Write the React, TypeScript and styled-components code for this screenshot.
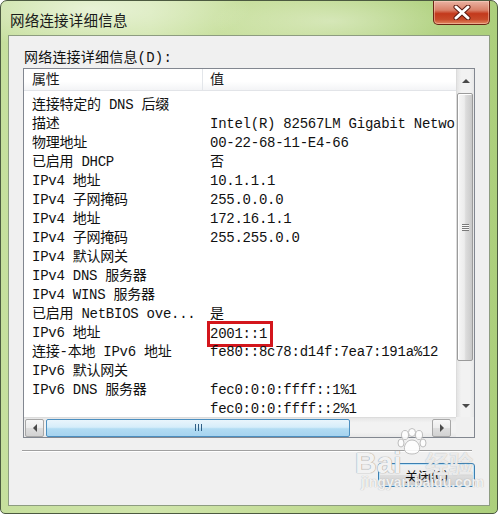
import type { FC } from 'react'
import styled, { createGlobalStyle } from 'styled-components'

interface DetailRow {
  name: string
  value: string
  marked?: boolean
}

const rows: DetailRow[] = [
  { name: '连接特定的 DNS 后缀', value: '' },
  { name: '描述', value: 'Intel(R) 82567LM Gigabit Network Connection' },
  { name: '物理地址', value: '00-22-68-11-E4-66' },
  { name: '已启用 DHCP', value: '否' },
  { name: 'IPv4 地址', value: '10.1.1.1' },
  { name: 'IPv4 子网掩码', value: '255.0.0.0' },
  { name: 'IPv4 地址', value: '172.16.1.1' },
  { name: 'IPv4 子网掩码', value: '255.255.0.0' },
  { name: 'IPv4 默认网关', value: '' },
  { name: 'IPv4 DNS 服务器', value: '' },
  { name: 'IPv4 WINS 服务器', value: '' },
  { name: '已启用 NetBIOS ove...', value: '是' },
  { name: 'IPv6 地址', value: '2001::1', marked: true },
  { name: '连接-本地 IPv6 地址', value: 'fe80::8c78:d14f:7ea7:191a%12' },
  { name: 'IPv6 默认网关', value: '' },
  { name: 'IPv6 DNS 服务器', value: 'fec0:0:0:ffff::1%1' },
  { name: '', value: 'fec0:0:0:ffff::2%1' },
]

const GlobalStyle = createGlobalStyle`
  html, body {
    margin: 0;
    padding: 0;
    background: #ffffff;
  }
`

const Arrow: FC<{ dir: 'up' | 'down' | 'left' | 'right' }> = ({ dir }) => {
  const pts = {
    up: '0,5 4,1 8,5',
    down: '0,1 4,5 8,1',
    left: '5,0 1,4 5,8',
    right: '1,0 5,4 1,8',
  }[dir]
  const vertical = dir === 'up' || dir === 'down'
  return (
    <svg width={vertical ? 8 : 6} height={vertical ? 6 : 8} viewBox={vertical ? '0 0 8 6' : '0 0 6 8'}>
      <polygon points={pts} fill="#4a4a4a" />
    </svg>
  )
}

const App: FC = () => {
  return (
    <>
      <GlobalStyle />
      <Window>
        <TitleBar>
          <TitleText>网络连接详细信息</TitleText>
          <CloseBox aria-label="关闭">
            <svg width="20" height="15" viewBox="0 0 20 15">
              <path d="M4 2 L16 13 M16 2 L4 13" stroke="#5b1a10" strokeWidth="5" strokeLinecap="round" />
              <path d="M4 2 L16 13 M16 2 L4 13" stroke="#ffffff" strokeWidth="3" strokeLinecap="round" />
            </svg>
          </CloseBox>
        </TitleBar>

        <Client>
          <FieldLabel>网络连接详细信息(D):</FieldLabel>
          <ListBox>
            <ListView>
              <Header>
                <HeaderCell>属性</HeaderCell>
                <HeaderCell $last>值</HeaderCell>
              </Header>
              <RowList>
                {rows.map((row, i) => (
                  <Row key={i}>
                    <NameCell>{row.name}</NameCell>
                    <ValueCell>{row.marked ? <Marked>{row.value}</Marked> : row.value}</ValueCell>
                  </Row>
                ))}
              </RowList>
            </ListView>

            <VScroll>
              <VArrow $h={23}>
                <Arrow dir="up" />
              </VArrow>
              <VThumb>
                <VGrip />
              </VThumb>
              <VArrow $h={20} $grow>
                <Arrow dir="down" />
              </VArrow>
            </VScroll>

            <HScroll>
              <HButton>
                <Arrow dir="left" />
              </HButton>
              <HThumb>
                <HGrip />
              </HThumb>
              <HButton $end>
                <Arrow dir="right" />
              </HButton>
            </HScroll>
            <Corner />
          </ListBox>

          <Separator />
          <CloseButton>关闭(C)</CloseButton>

          <Watermark aria-hidden>
            <Paw>
              <svg width="30" height="28" viewBox="0 0 30 28">
                <g fill="#ffffff" stroke="#b9b9b9" strokeWidth="1">
                  <ellipse cx="8" cy="7" rx="3.5" ry="4.5" />
                  <ellipse cx="15" cy="4.5" rx="3.5" ry="4" />
                  <ellipse cx="22" cy="7" rx="3.5" ry="4.5" />
                  <ellipse cx="4" cy="15" rx="3" ry="4" />
                  <ellipse cx="26" cy="15" rx="3" ry="4" />
                  <path d="M15 12 C9 12 6 19 8 23 C10 27 20 27 22 23 C24 19 21 12 15 12 Z" />
                </g>
              </svg>
            </Paw>
            <WmBai>Bai</WmBai>
            <WmJy>经验</WmJy>
            <WmUrl>jingyan.baidu.com</WmUrl>
          </Watermark>
        </Client>
      </Window>
    </>
  )
}

const listFont = `"Liberation Mono", "Noto Sans CJK SC", monospace`

const Window = styled.div`
  position: relative;
  display: flex;
  flex-direction: column;
  width: 498px;
  height: 514px;
  box-sizing: border-box;
  border: 1px solid #4c5a40;
  border-radius: 7px 7px 5px 5px;
  overflow: hidden;
  background:
    radial-gradient(ellipse 160px 40px at 90px 8px, rgba(255, 255, 255, 0.55), rgba(255, 255, 255, 0) 100%),
    radial-gradient(ellipse 120px 30px at 330px 20px, rgba(255, 255, 255, 0.35), rgba(255, 255, 255, 0) 100%),
    linear-gradient(to right, #c6df9d 0%, #d0e5ab 30%, #c3dc96 60%, #accf7c 100%);
`

const TitleBar = styled.div`
  display: flex;
  align-items: flex-start;
  height: 34px;
  flex-shrink: 0;
`

const TitleText = styled.div`
  margin: 10px 0 0 9px;
  font-family: "Noto Sans CJK SC", sans-serif;
  font-size: 14.5px;
  line-height: 18px;
  color: #1a1a1a;
  letter-spacing: 0.2px;
`

const CloseBox = styled.div`
  display: flex;
  align-items: center;
  justify-content: center;
  width: 57px;
  height: 24px;
  margin-left: auto;
  margin-right: 7px;
  box-sizing: border-box;
  border: 1px solid #6a2414;
  border-top: none;
  border-radius: 0 0 5px 5px;
  background: linear-gradient(to bottom, #eab3a3 0%, #d98068 40%, #c3391c 55%, #c84a2a 80%, #e28a62 100%);
  box-shadow: inset 0 0 0 1px rgba(255, 220, 200, 0.45);
`

const Client = styled.div`
  position: relative;
  display: flex;
  flex-direction: column;
  flex: 1;
  margin: 0 7px 7px 7px;
  border: 1px solid #8d9c80;
  background: #f0f0f0;
`

const FieldLabel = styled.div`
  margin: 13px 0 0 15px;
  font-family: ${listFont};
  font-size: 14px;
  letter-spacing: 0.2px;
  line-height: 19px;
  color: #111;
`

const ListBox = styled.div`
  display: grid;
  grid-template-columns: 1fr 18px;
  grid-template-rows: 1fr 20px;
  width: 452px;
  height: 370px;
  margin: 0 0 0 14px;
  box-sizing: border-box;
  border: 1px solid #828790;
  background: #ffffff;
`

const ListView = styled.div`
  display: flex;
  flex-direction: column;
  overflow: hidden;
  min-width: 0;
`

const Header = styled.div`
  display: grid;
  grid-template-columns: 179px 1fr;
  height: 22px;
  flex-shrink: 0;
  box-sizing: border-box;
  border-bottom: 1px solid #e2e4e8;
  background: linear-gradient(to bottom, #ffffff 0%, #ffffff 60%, #f3f4f6 100%);
`

const HeaderCell = styled.div<{ $last?: boolean }>`
  padding: 2px 0 0 ${(p) => (p.$last ? 7 : 8)}px;
  border-right: ${(p) => (p.$last ? 'none' : '1px solid #e3e6ea')};
  font-family: ${listFont};
  font-size: 14px;
  letter-spacing: -0.25px;
  line-height: 19px;
  color: #1a1a1a;
`

const RowList = styled.div`
  display: flex;
  flex-direction: column;
  padding-top: 5px;
`

const Row = styled.div`
  display: grid;
  grid-template-columns: 179px 1fr;
  height: 19px;
  flex-shrink: 0;
  font-family: ${listFont};
  font-size: 14px;
  letter-spacing: -0.25px;
  line-height: 19px;
  color: #111;
  white-space: nowrap;
`

const NameCell = styled.div`
  padding-left: 8px;
  overflow: hidden;
`

const ValueCell = styled.div`
  padding-left: 7px;
  overflow: visible;
`

const Marked = styled.span`
  display: inline-block;
  line-height: 20px;
  padding-right: 3px;
  outline: 3px solid #d3161c;
`

const VScroll = styled.div`
  display: flex;
  flex-direction: column;
  border-left: 1px solid #dcdcdc;
  background: linear-gradient(to right, #e4e4e4 0%, #f2f2f2 25%, #f2f2f2 75%, #e8e8e8 100%);
`

const VArrow = styled.div<{ $h: number; $grow?: boolean }>`
  display: flex;
  align-items: ${(p) => (p.$grow ? 'flex-end' : 'center')};
  justify-content: center;
  height: ${(p) => p.$h}px;
  flex: ${(p) => (p.$grow ? 1 : 'none')};
  padding-bottom: ${(p) => (p.$grow ? 8 : 0)}px;
  box-sizing: border-box;
`

const VThumb = styled.div`
  display: flex;
  align-items: center;
  justify-content: center;
  height: 266px;
  margin: 1px 1px 0 0;
  border: 1px solid #9b9b9b;
  border-radius: 2px;
  background: linear-gradient(to right, #f6f6f6 0%, #ececec 45%, #dcdcdc 55%, #c9c9c9 100%);
  box-shadow: inset 1px 1px 0 #ffffff;
`

const VGrip = styled.div`
  width: 7px;
  height: 7px;
  background: repeating-linear-gradient(to bottom, #7a7a7a 0 1px, #f8f8f8 1px 2px);
`

const HScroll = styled.div`
  display: flex;
  align-items: center;
  gap: 2px;
  padding: 0 5px 0 1px;
  border-top: 1px solid #dcdcdc;
  background: linear-gradient(to bottom, #e6e6e6 0%, #f2f2f2 25%, #f2f2f2 75%, #e8e8e8 100%);
`

const HButton = styled.div<{ $end?: boolean }>`
  display: flex;
  align-items: center;
  justify-content: center;
  width: 19px;
  height: 18px;
  margin-left: ${(p) => (p.$end ? 'auto' : '0')};
  box-sizing: border-box;
  border: 1px solid #a7a7a7;
  border-radius: 2px;
  background: linear-gradient(to bottom, #f7f7f7 0%, #ececec 50%, #dedede 51%, #d2d2d2 100%);
`

const HThumb = styled.div`
  display: flex;
  align-items: center;
  justify-content: center;
  width: 304px;
  height: 18px;
  box-sizing: border-box;
  border: 1px solid #4c8fc0;
  border-radius: 2px;
  background: linear-gradient(to bottom, #e9f5fc 0%, #d6edfa 45%, #b2dcf3 55%, #a6d3ef 100%);
`

const HGrip = styled.div`
  width: 7px;
  height: 7px;
  background: repeating-linear-gradient(to right, #2f5f86 0 1px, transparent 1px 3px);
`

const Corner = styled.div`
  background: #f0f0f0;
`

const Separator = styled.div`
  width: 450px;
  height: 1px;
  margin: 12px 0 0 13px;
  background: #a0a0a0;
  border-bottom: 1px solid #ffffff;
`

const CloseButton = styled.button`
  align-self: flex-end;
  width: 97px;
  height: 24px;
  margin: 11px 14px 0 0;
  padding: 0;
  border: 1px solid #3c7fb1;
  border-radius: 3px;
  background: linear-gradient(to bottom, #f2f2f2 0%, #ebebeb 50%, #dddddd 51%, #cfcfcf 100%);
  box-shadow: inset 0 0 0 1px #bfe4f9;
  font-family: "Noto Sans CJK SC", sans-serif;
  font-size: 13px;
  color: #111;
`

const Watermark = styled.div`
  position: absolute;
  left: 344px;
  top: 392px;
  width: 130px;
  height: 62px;
  pointer-events: none;
`

const Paw = styled.div`
  position: absolute;
  left: 44px;
  top: 0;
  opacity: 0.9;
`

const WmBai = styled.div`
  position: absolute;
  left: 2px;
  top: 20px;
  font-family: "Liberation Sans", Arial, sans-serif;
  font-size: 30px;
  font-weight: 700;
  color: rgba(255, 255, 255, 0.9);
  text-shadow: 0 0 1px #9a9a9a, 0 0 1px #9a9a9a;
  line-height: 30px;
`

const WmJy = styled.div`
  position: absolute;
  left: 72px;
  top: 22px;
  font-family: "Noto Sans CJK SC", sans-serif;
  font-size: 24px;
  font-weight: 700;
  color: rgba(255, 255, 255, 0.75);
  text-shadow: 0 0 1px #a8a8a8;
  line-height: 26px;
`

const WmUrl = styled.div`
  position: absolute;
  left: 8px;
  top: 46px;
  font-family: "Liberation Sans", Arial, sans-serif;
  font-size: 14px;
  font-weight: 700;
  color: rgba(255, 255, 255, 0.85);
  text-shadow: 0 0 1px #a0a0a0;
  line-height: 16px;
`

export default App
